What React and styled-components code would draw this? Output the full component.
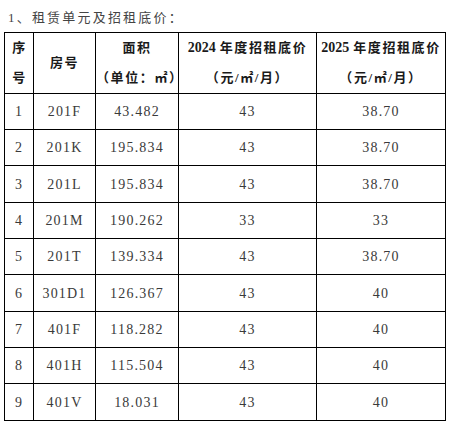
import React from "react";
import styled, { createGlobalStyle } from "styled-components";

const Global = createGlobalStyle`
  html, body { margin: 0; padding: 0; background: #fff; }
  body { font-family: "Liberation Serif", "Noto Sans CJK SC", serif; }
`;

const Page = styled.div`
  width: 449px;
  height: 425px;
  background: #fff;
  overflow: hidden;
`;

const Title = styled.div`
  height: 32px;
  display: flex;
  align-items: center;
  padding-left: 8px;
  font-family: "Liberation Serif", "Noto Sans CJK SC", serif;
  font-size: 13px;
  letter-spacing: 2.2px;
  color: #444;
`;

const Grid = styled.div`
  margin-left: 4px;
  width: 441px;
  display: grid;
  grid-template-columns: 29px 62px 83px 138px 129px;
  grid-template-rows: 61px 36px 36px 37px 36px 36px 37px 36px 36px 37px;
  border-left: 1px solid #000;
  border-top: 1px solid #000;
`;

const Cell = styled.div`
  border-right: 1px solid #000;
  border-bottom: 1px solid #000;
  display: flex;
  align-items: center;
  justify-content: center;
  text-align: center;
  box-sizing: border-box;
`;

const HeadCell = styled(Cell)`
  flex-direction: column;
  font-family: "Liberation Serif", "Noto Sans CJK SC", serif;
  font-weight: bold;
  font-size: 13px;
  letter-spacing: ${(p) => (p.$wide ? "1.6px" : "0.5px")};
  line-height: 30px;
  color: #1a1a1a;
`;

const Year = styled.span`
  font-family: "Liberation Serif", serif;
  font-size: 14px;
  letter-spacing: 0;
  margin-right: 4px;
`;

const BodyCell = styled(Cell)`
  font-family: "Liberation Serif", serif;
  font-size: 14px;
  letter-spacing: 1.2px;
  color: #3a3a3a;
  padding-top: 1px;
`;

const rows = [
  ["1", "201F", "43.482", "43", "38.70"],
  ["2", "201K", "195.834", "43", "38.70"],
  ["3", "201L", "195.834", "43", "38.70"],
  ["4", "201M", "190.262", "33", "33"],
  ["5", "201T", "139.334", "43", "38.70"],
  ["6", "301D1", "126.367", "43", "40"],
  ["7", "401F", "118.282", "43", "40"],
  ["8", "401H", "115.504", "43", "40"],
  ["9", "401V", "18.031", "43", "40"],
];

export default function App() {
  return (
    <Page>
      <Global />
      <Title>1、租赁单元及招租底价：</Title>
      <Grid>
        <HeadCell>
          <span>序</span>
          <span>号</span>
        </HeadCell>
        <HeadCell $wide>房号</HeadCell>
        <HeadCell $wide>
          <span>面积</span>
          <span>（单位：㎡）</span>
        </HeadCell>
        <HeadCell $wide>
          <span>
            <Year>2024</Year>年度招租底价
          </span>
          <span>（元/㎡/月）</span>
        </HeadCell>
        <HeadCell $wide>
          <span>
            <Year>2025</Year>年度招租底价
          </span>
          <span>（元/㎡/月）</span>
        </HeadCell>
        {rows.map((r) =>
          r.map((v, i) => <BodyCell key={r[0] + "-" + i}>{v}</BodyCell>)
        )}
      </Grid>
    </Page>
  );
}
